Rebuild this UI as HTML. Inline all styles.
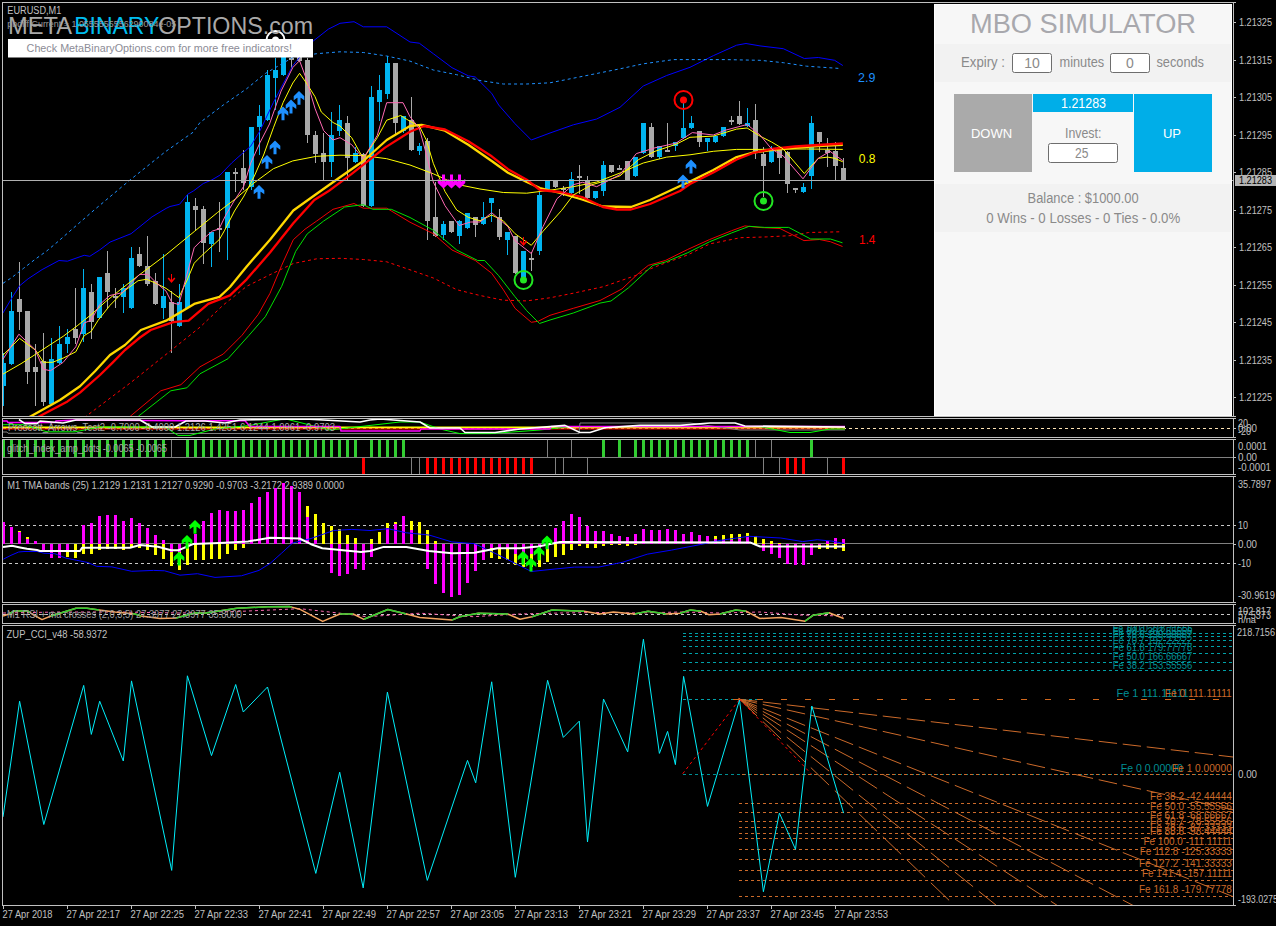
<!DOCTYPE html>
<html><head><meta charset="utf-8"><style>
html,body{margin:0;padding:0;background:#000;width:1276px;height:926px;overflow:hidden}
svg{display:block;font-family:"Liberation Sans", sans-serif}
</style></head><body>
<svg width="1276" height="926" viewBox="0 0 1276 926">
<rect width="1276" height="926" fill="#000"/>
<line x1="2" y1="2.5" x2="1234" y2="2.5" stroke="#c0c0c0" stroke-width="1" shape-rendering="crispEdges"/><line x1="2" y1="416.5" x2="1234" y2="416.5" stroke="#c0c0c0" stroke-width="1" shape-rendering="crispEdges"/><line x1="2.5" y1="2" x2="2.5" y2="417" stroke="#c0c0c0" stroke-width="1" shape-rendering="crispEdges"/><line x1="1233.5" y1="2" x2="1233.5" y2="417" stroke="#c0c0c0" stroke-width="1" shape-rendering="crispEdges"/><line x1="1234" y1="2.5" x2="1236" y2="2.5" stroke="#c0c0c0" stroke-width="1" shape-rendering="crispEdges"/><line x1="1234" y1="416.5" x2="1236" y2="416.5" stroke="#c0c0c0" stroke-width="1" shape-rendering="crispEdges"/><line x1="2" y1="418.5" x2="1234" y2="418.5" stroke="#c0c0c0" stroke-width="1" shape-rendering="crispEdges"/><line x1="2" y1="437.5" x2="1234" y2="437.5" stroke="#c0c0c0" stroke-width="1" shape-rendering="crispEdges"/><line x1="2.5" y1="418" x2="2.5" y2="438" stroke="#c0c0c0" stroke-width="1" shape-rendering="crispEdges"/><line x1="1233.5" y1="418" x2="1233.5" y2="438" stroke="#c0c0c0" stroke-width="1" shape-rendering="crispEdges"/><line x1="1234" y1="418.5" x2="1236" y2="418.5" stroke="#c0c0c0" stroke-width="1" shape-rendering="crispEdges"/><line x1="1234" y1="437.5" x2="1236" y2="437.5" stroke="#c0c0c0" stroke-width="1" shape-rendering="crispEdges"/><line x1="2" y1="439.5" x2="1234" y2="439.5" stroke="#c0c0c0" stroke-width="1" shape-rendering="crispEdges"/><line x1="2" y1="474.5" x2="1234" y2="474.5" stroke="#c0c0c0" stroke-width="1" shape-rendering="crispEdges"/><line x1="2.5" y1="439" x2="2.5" y2="475" stroke="#c0c0c0" stroke-width="1" shape-rendering="crispEdges"/><line x1="1233.5" y1="439" x2="1233.5" y2="475" stroke="#c0c0c0" stroke-width="1" shape-rendering="crispEdges"/><line x1="1234" y1="439.5" x2="1236" y2="439.5" stroke="#c0c0c0" stroke-width="1" shape-rendering="crispEdges"/><line x1="1234" y1="474.5" x2="1236" y2="474.5" stroke="#c0c0c0" stroke-width="1" shape-rendering="crispEdges"/><line x1="2" y1="476.5" x2="1234" y2="476.5" stroke="#c0c0c0" stroke-width="1" shape-rendering="crispEdges"/><line x1="2" y1="602.5" x2="1234" y2="602.5" stroke="#c0c0c0" stroke-width="1" shape-rendering="crispEdges"/><line x1="2.5" y1="476" x2="2.5" y2="603" stroke="#c0c0c0" stroke-width="1" shape-rendering="crispEdges"/><line x1="1233.5" y1="476" x2="1233.5" y2="603" stroke="#c0c0c0" stroke-width="1" shape-rendering="crispEdges"/><line x1="1234" y1="476.5" x2="1236" y2="476.5" stroke="#c0c0c0" stroke-width="1" shape-rendering="crispEdges"/><line x1="1234" y1="602.5" x2="1236" y2="602.5" stroke="#c0c0c0" stroke-width="1" shape-rendering="crispEdges"/><line x1="2" y1="604.5" x2="1234" y2="604.5" stroke="#c0c0c0" stroke-width="1" shape-rendering="crispEdges"/><line x1="2" y1="623.5" x2="1234" y2="623.5" stroke="#c0c0c0" stroke-width="1" shape-rendering="crispEdges"/><line x1="2.5" y1="604" x2="2.5" y2="624" stroke="#c0c0c0" stroke-width="1" shape-rendering="crispEdges"/><line x1="1233.5" y1="604" x2="1233.5" y2="624" stroke="#c0c0c0" stroke-width="1" shape-rendering="crispEdges"/><line x1="1234" y1="604.5" x2="1236" y2="604.5" stroke="#c0c0c0" stroke-width="1" shape-rendering="crispEdges"/><line x1="1234" y1="623.5" x2="1236" y2="623.5" stroke="#c0c0c0" stroke-width="1" shape-rendering="crispEdges"/><line x1="2" y1="625.5" x2="1234" y2="625.5" stroke="#c0c0c0" stroke-width="1" shape-rendering="crispEdges"/><line x1="2" y1="905.5" x2="1234" y2="905.5" stroke="#c0c0c0" stroke-width="1" shape-rendering="crispEdges"/><line x1="2.5" y1="625" x2="2.5" y2="906" stroke="#c0c0c0" stroke-width="1" shape-rendering="crispEdges"/><line x1="1233.5" y1="625" x2="1233.5" y2="906" stroke="#c0c0c0" stroke-width="1" shape-rendering="crispEdges"/><line x1="1234" y1="625.5" x2="1236" y2="625.5" stroke="#c0c0c0" stroke-width="1" shape-rendering="crispEdges"/><line x1="1234" y1="905.5" x2="1236" y2="905.5" stroke="#c0c0c0" stroke-width="1" shape-rendering="crispEdges"/><line x1="1234" y1="22.5" x2="1236" y2="22.5" stroke="#c0c0c0" stroke-width="1" shape-rendering="crispEdges"/><text x="1239" y="25.5" fill="#c0c0c0" font-size="10" text-anchor="start" textLength="33" lengthAdjust="spacingAndGlyphs" >1.21325</text><line x1="1234" y1="60.5" x2="1236" y2="60.5" stroke="#c0c0c0" stroke-width="1" shape-rendering="crispEdges"/><text x="1239" y="63.5" fill="#c0c0c0" font-size="10" text-anchor="start" textLength="33" lengthAdjust="spacingAndGlyphs" >1.21315</text><line x1="1234" y1="97.5" x2="1236" y2="97.5" stroke="#c0c0c0" stroke-width="1" shape-rendering="crispEdges"/><text x="1239" y="100.5" fill="#c0c0c0" font-size="10" text-anchor="start" textLength="33" lengthAdjust="spacingAndGlyphs" >1.21305</text><line x1="1234" y1="135.5" x2="1236" y2="135.5" stroke="#c0c0c0" stroke-width="1" shape-rendering="crispEdges"/><text x="1239" y="138.5" fill="#c0c0c0" font-size="10" text-anchor="start" textLength="33" lengthAdjust="spacingAndGlyphs" >1.21295</text><line x1="1234" y1="172.5" x2="1236" y2="172.5" stroke="#c0c0c0" stroke-width="1" shape-rendering="crispEdges"/><text x="1239" y="175.5" fill="#c0c0c0" font-size="10" text-anchor="start" textLength="33" lengthAdjust="spacingAndGlyphs" >1.21285</text><line x1="1234" y1="210.5" x2="1236" y2="210.5" stroke="#c0c0c0" stroke-width="1" shape-rendering="crispEdges"/><text x="1239" y="213.5" fill="#c0c0c0" font-size="10" text-anchor="start" textLength="33" lengthAdjust="spacingAndGlyphs" >1.21275</text><line x1="1234" y1="247.5" x2="1236" y2="247.5" stroke="#c0c0c0" stroke-width="1" shape-rendering="crispEdges"/><text x="1239" y="250.5" fill="#c0c0c0" font-size="10" text-anchor="start" textLength="33" lengthAdjust="spacingAndGlyphs" >1.21265</text><line x1="1234" y1="285.5" x2="1236" y2="285.5" stroke="#c0c0c0" stroke-width="1" shape-rendering="crispEdges"/><text x="1239" y="288.5" fill="#c0c0c0" font-size="10" text-anchor="start" textLength="33" lengthAdjust="spacingAndGlyphs" >1.21255</text><line x1="1234" y1="322.5" x2="1236" y2="322.5" stroke="#c0c0c0" stroke-width="1" shape-rendering="crispEdges"/><text x="1239" y="325.5" fill="#c0c0c0" font-size="10" text-anchor="start" textLength="33" lengthAdjust="spacingAndGlyphs" >1.21245</text><line x1="1234" y1="360.5" x2="1236" y2="360.5" stroke="#c0c0c0" stroke-width="1" shape-rendering="crispEdges"/><text x="1239" y="363.5" fill="#c0c0c0" font-size="10" text-anchor="start" textLength="33" lengthAdjust="spacingAndGlyphs" >1.21235</text><line x1="1234" y1="397.5" x2="1236" y2="397.5" stroke="#c0c0c0" stroke-width="1" shape-rendering="crispEdges"/><text x="1239" y="400.5" fill="#c0c0c0" font-size="10" text-anchor="start" textLength="33" lengthAdjust="spacingAndGlyphs" >1.21225</text><line x1="3.5" y1="906" x2="3.5" y2="909" stroke="#c0c0c0" stroke-width="1" shape-rendering="crispEdges"/><text x="2.5" y="918" fill="#c0c0c0" font-size="10" text-anchor="start" textLength="50" lengthAdjust="spacingAndGlyphs" >27 Apr 2018</text><line x1="67.5" y1="906" x2="67.5" y2="909" stroke="#c0c0c0" stroke-width="1" shape-rendering="crispEdges"/><text x="66.5" y="918" fill="#c0c0c0" font-size="10" text-anchor="start" textLength="53.5" lengthAdjust="spacingAndGlyphs" >27 Apr 22:17</text><line x1="131.5" y1="906" x2="131.5" y2="909" stroke="#c0c0c0" stroke-width="1" shape-rendering="crispEdges"/><text x="130.5" y="918" fill="#c0c0c0" font-size="10" text-anchor="start" textLength="53.5" lengthAdjust="spacingAndGlyphs" >27 Apr 22:25</text><line x1="195.5" y1="906" x2="195.5" y2="909" stroke="#c0c0c0" stroke-width="1" shape-rendering="crispEdges"/><text x="194.5" y="918" fill="#c0c0c0" font-size="10" text-anchor="start" textLength="53.5" lengthAdjust="spacingAndGlyphs" >27 Apr 22:33</text><line x1="259.5" y1="906" x2="259.5" y2="909" stroke="#c0c0c0" stroke-width="1" shape-rendering="crispEdges"/><text x="258.5" y="918" fill="#c0c0c0" font-size="10" text-anchor="start" textLength="53.5" lengthAdjust="spacingAndGlyphs" >27 Apr 22:41</text><line x1="323.5" y1="906" x2="323.5" y2="909" stroke="#c0c0c0" stroke-width="1" shape-rendering="crispEdges"/><text x="322.5" y="918" fill="#c0c0c0" font-size="10" text-anchor="start" textLength="53.5" lengthAdjust="spacingAndGlyphs" >27 Apr 22:49</text><line x1="387.5" y1="906" x2="387.5" y2="909" stroke="#c0c0c0" stroke-width="1" shape-rendering="crispEdges"/><text x="386.5" y="918" fill="#c0c0c0" font-size="10" text-anchor="start" textLength="53.5" lengthAdjust="spacingAndGlyphs" >27 Apr 22:57</text><line x1="451.5" y1="906" x2="451.5" y2="909" stroke="#c0c0c0" stroke-width="1" shape-rendering="crispEdges"/><text x="450.5" y="918" fill="#c0c0c0" font-size="10" text-anchor="start" textLength="53.5" lengthAdjust="spacingAndGlyphs" >27 Apr 23:05</text><line x1="515.5" y1="906" x2="515.5" y2="909" stroke="#c0c0c0" stroke-width="1" shape-rendering="crispEdges"/><text x="514.5" y="918" fill="#c0c0c0" font-size="10" text-anchor="start" textLength="53.5" lengthAdjust="spacingAndGlyphs" >27 Apr 23:13</text><line x1="579.5" y1="906" x2="579.5" y2="909" stroke="#c0c0c0" stroke-width="1" shape-rendering="crispEdges"/><text x="578.5" y="918" fill="#c0c0c0" font-size="10" text-anchor="start" textLength="53.5" lengthAdjust="spacingAndGlyphs" >27 Apr 23:21</text><line x1="643.5" y1="906" x2="643.5" y2="909" stroke="#c0c0c0" stroke-width="1" shape-rendering="crispEdges"/><text x="642.5" y="918" fill="#c0c0c0" font-size="10" text-anchor="start" textLength="53.5" lengthAdjust="spacingAndGlyphs" >27 Apr 23:29</text><line x1="707.5" y1="906" x2="707.5" y2="909" stroke="#c0c0c0" stroke-width="1" shape-rendering="crispEdges"/><text x="706.5" y="918" fill="#c0c0c0" font-size="10" text-anchor="start" textLength="53.5" lengthAdjust="spacingAndGlyphs" >27 Apr 23:37</text><line x1="771.5" y1="906" x2="771.5" y2="909" stroke="#c0c0c0" stroke-width="1" shape-rendering="crispEdges"/><text x="770.5" y="918" fill="#c0c0c0" font-size="10" text-anchor="start" textLength="53.5" lengthAdjust="spacingAndGlyphs" >27 Apr 23:45</text><line x1="835.5" y1="906" x2="835.5" y2="909" stroke="#c0c0c0" stroke-width="1" shape-rendering="crispEdges"/><text x="834.5" y="918" fill="#c0c0c0" font-size="10" text-anchor="start" textLength="53.5" lengthAdjust="spacingAndGlyphs" >27 Apr 23:53</text><rect x="3" y="353" width="1" height="53" fill="#00b4f0"/><rect x="3" y="363" width="3" height="23" fill="#00b4f0"/><rect x="11" y="292" width="1" height="73" fill="#00b4f0"/><rect x="9" y="311" width="5" height="53" fill="#00b4f0"/><rect x="19" y="262" width="1" height="68" fill="#a9a9a9"/><rect x="17" y="299" width="5" height="13" fill="#a9a9a9"/><rect x="27" y="311" width="1" height="73" fill="#a9a9a9"/><rect x="25" y="311" width="5" height="61" fill="#a9a9a9"/><rect x="35" y="344" width="1" height="62" fill="#a9a9a9"/><rect x="33" y="367" width="5" height="5" fill="#a9a9a9"/><rect x="43" y="333" width="1" height="73" fill="#a9a9a9"/><rect x="41" y="361" width="5" height="41" fill="#a9a9a9"/><rect x="51" y="338" width="1" height="67" fill="#00b4f0"/><rect x="49" y="359" width="5" height="45" fill="#00b4f0"/><rect x="59" y="326" width="1" height="38" fill="#00b4f0"/><rect x="57" y="344" width="5" height="19" fill="#00b4f0"/><rect x="67" y="329" width="1" height="24" fill="#00b4f0"/><rect x="65" y="337" width="5" height="7" fill="#00b4f0"/><rect x="75" y="288" width="1" height="56" fill="#a9a9a9"/><rect x="73" y="329" width="5" height="9" fill="#a9a9a9"/><rect x="83" y="269" width="1" height="73" fill="#00b4f0"/><rect x="81" y="288" width="5" height="46" fill="#00b4f0"/><rect x="91" y="284" width="1" height="55" fill="#a9a9a9"/><rect x="89" y="292" width="5" height="30" fill="#a9a9a9"/><rect x="99" y="277" width="1" height="42" fill="#00b4f0"/><rect x="97" y="277" width="5" height="41" fill="#00b4f0"/><rect x="107" y="251" width="1" height="58" fill="#a9a9a9"/><rect x="105" y="273" width="5" height="19" fill="#a9a9a9"/><rect x="115" y="288" width="1" height="20" fill="#a9a9a9"/><rect x="113" y="296" width="5" height="2" fill="#a9a9a9"/><rect x="123" y="284" width="1" height="29" fill="#00b4f0"/><rect x="121" y="288" width="5" height="9" fill="#00b4f0"/><rect x="131" y="247" width="1" height="62" fill="#00b4f0"/><rect x="129" y="258" width="5" height="50" fill="#00b4f0"/><rect x="139" y="247" width="1" height="20" fill="#a9a9a9"/><rect x="137" y="254" width="5" height="12" fill="#a9a9a9"/><rect x="147" y="236" width="1" height="50" fill="#a9a9a9"/><rect x="145" y="266" width="5" height="18" fill="#a9a9a9"/><rect x="155" y="273" width="1" height="32" fill="#a9a9a9"/><rect x="153" y="281" width="5" height="23" fill="#a9a9a9"/><rect x="163" y="254" width="1" height="65" fill="#00b4f0"/><rect x="161" y="296" width="5" height="12" fill="#00b4f0"/><rect x="171" y="291" width="1" height="62" fill="#a9a9a9"/><rect x="169" y="302" width="5" height="19" fill="#a9a9a9"/><rect x="179" y="284" width="1" height="43" fill="#00b4f0"/><rect x="177" y="302" width="5" height="24" fill="#00b4f0"/><rect x="187" y="195" width="1" height="114" fill="#00b4f0"/><rect x="185" y="202" width="5" height="106" fill="#00b4f0"/><rect x="195" y="198" width="1" height="32" fill="#a9a9a9"/><rect x="193" y="206" width="5" height="4" fill="#a9a9a9"/><rect x="203" y="206" width="1" height="58" fill="#a9a9a9"/><rect x="201" y="209" width="5" height="34" fill="#a9a9a9"/><rect x="211" y="232" width="1" height="35" fill="#00b4f0"/><rect x="209" y="232" width="5" height="12" fill="#00b4f0"/><rect x="219" y="202" width="1" height="50" fill="#a9a9a9"/><rect x="217" y="228" width="5" height="2" fill="#a9a9a9"/><rect x="227" y="172" width="1" height="88" fill="#00b4f0"/><rect x="225" y="172" width="5" height="56" fill="#00b4f0"/><rect x="235" y="168" width="1" height="24" fill="#a9a9a9"/><rect x="233" y="172" width="5" height="2" fill="#a9a9a9"/><rect x="243" y="150" width="1" height="40" fill="#a9a9a9"/><rect x="241" y="168" width="5" height="15" fill="#a9a9a9"/><rect x="251" y="127" width="1" height="63" fill="#00b4f0"/><rect x="249" y="127" width="5" height="60" fill="#00b4f0"/><rect x="259" y="105" width="1" height="50" fill="#00b4f0"/><rect x="257" y="116" width="5" height="11" fill="#00b4f0"/><rect x="267" y="70" width="1" height="51" fill="#00b4f0"/><rect x="265" y="75" width="5" height="45" fill="#00b4f0"/><rect x="275" y="58" width="1" height="52" fill="#00b4f0"/><rect x="273" y="70" width="5" height="8" fill="#00b4f0"/><rect x="283" y="40" width="1" height="36" fill="#00b4f0"/><rect x="281" y="45" width="5" height="30" fill="#00b4f0"/><rect x="291" y="52" width="1" height="16" fill="#a9a9a9"/><rect x="289" y="58" width="5" height="2" fill="#a9a9a9"/><rect x="299" y="45" width="1" height="17" fill="#a9a9a9"/><rect x="297" y="48" width="5" height="13" fill="#a9a9a9"/><rect x="307" y="58" width="1" height="85" fill="#a9a9a9"/><rect x="305" y="60" width="5" height="75" fill="#a9a9a9"/><rect x="315" y="131" width="1" height="32" fill="#a9a9a9"/><rect x="313" y="135" width="5" height="19" fill="#a9a9a9"/><rect x="323" y="133" width="1" height="48" fill="#a9a9a9"/><rect x="321" y="153" width="5" height="9" fill="#a9a9a9"/><rect x="331" y="112" width="1" height="65" fill="#00b4f0"/><rect x="329" y="135" width="5" height="27" fill="#00b4f0"/><rect x="339" y="105" width="1" height="31" fill="#00b4f0"/><rect x="337" y="120" width="5" height="11" fill="#00b4f0"/><rect x="347" y="116" width="1" height="65" fill="#a9a9a9"/><rect x="345" y="123" width="5" height="35" fill="#a9a9a9"/><rect x="355" y="147" width="1" height="16" fill="#00b4f0"/><rect x="353" y="153" width="5" height="9" fill="#00b4f0"/><rect x="363" y="153" width="1" height="54" fill="#a9a9a9"/><rect x="361" y="154" width="5" height="52" fill="#a9a9a9"/><rect x="371" y="86" width="1" height="121" fill="#00b4f0"/><rect x="369" y="97" width="5" height="109" fill="#00b4f0"/><rect x="379" y="75" width="1" height="46" fill="#00b4f0"/><rect x="377" y="90" width="5" height="12" fill="#00b4f0"/><rect x="387" y="56" width="1" height="43" fill="#00b4f0"/><rect x="385" y="63" width="5" height="31" fill="#00b4f0"/><rect x="395" y="63" width="1" height="71" fill="#a9a9a9"/><rect x="393" y="63" width="5" height="60" fill="#a9a9a9"/><rect x="403" y="116" width="1" height="17" fill="#00b4f0"/><rect x="401" y="116" width="5" height="15" fill="#00b4f0"/><rect x="411" y="97" width="1" height="54" fill="#a9a9a9"/><rect x="409" y="120" width="5" height="30" fill="#a9a9a9"/><rect x="419" y="143" width="1" height="12" fill="#00b4f0"/><rect x="417" y="146" width="5" height="5" fill="#00b4f0"/><rect x="427" y="138" width="1" height="102" fill="#a9a9a9"/><rect x="425" y="141" width="5" height="80" fill="#a9a9a9"/><rect x="435" y="182" width="1" height="55" fill="#a9a9a9"/><rect x="433" y="217" width="5" height="19" fill="#a9a9a9"/><rect x="443" y="221" width="1" height="19" fill="#00b4f0"/><rect x="441" y="224" width="5" height="11" fill="#00b4f0"/><rect x="451" y="221" width="1" height="12" fill="#a9a9a9"/><rect x="449" y="221" width="5" height="11" fill="#a9a9a9"/><rect x="459" y="220" width="1" height="24" fill="#00b4f0"/><rect x="457" y="221" width="5" height="15" fill="#00b4f0"/><rect x="467" y="213" width="1" height="16" fill="#00b4f0"/><rect x="465" y="213" width="5" height="15" fill="#00b4f0"/><rect x="475" y="217" width="1" height="20" fill="#a9a9a9"/><rect x="473" y="217" width="5" height="8" fill="#a9a9a9"/><rect x="483" y="202" width="1" height="23" fill="#00b4f0"/><rect x="481" y="217" width="5" height="7" fill="#00b4f0"/><rect x="491" y="198" width="1" height="24" fill="#00b4f0"/><rect x="489" y="198" width="5" height="5" fill="#00b4f0"/><rect x="499" y="209" width="1" height="31" fill="#a9a9a9"/><rect x="497" y="217" width="5" height="20" fill="#a9a9a9"/><rect x="507" y="232" width="1" height="23" fill="#00b4f0"/><rect x="505" y="232" width="5" height="8" fill="#00b4f0"/><rect x="515" y="236" width="1" height="38" fill="#a9a9a9"/><rect x="513" y="236" width="5" height="37" fill="#a9a9a9"/><rect x="523" y="251" width="1" height="31" fill="#00b4f0"/><rect x="521" y="251" width="5" height="30" fill="#00b4f0"/><rect x="531" y="252" width="1" height="19" fill="#a9a9a9"/><rect x="529" y="258" width="5" height="2" fill="#a9a9a9"/><rect x="539" y="190" width="1" height="65" fill="#00b4f0"/><rect x="537" y="195" width="5" height="56" fill="#00b4f0"/><rect x="547" y="180" width="1" height="10" fill="#00b4f0"/><rect x="545" y="180" width="5" height="9" fill="#00b4f0"/><rect x="555" y="180" width="1" height="8" fill="#a9a9a9"/><rect x="553" y="180" width="5" height="7" fill="#a9a9a9"/><rect x="563" y="186" width="1" height="10" fill="#a9a9a9"/><rect x="561" y="188" width="5" height="2" fill="#a9a9a9"/><rect x="571" y="172" width="1" height="24" fill="#00b4f0"/><rect x="569" y="179" width="5" height="14" fill="#00b4f0"/><rect x="579" y="165" width="1" height="29" fill="#a9a9a9"/><rect x="577" y="176" width="5" height="2" fill="#a9a9a9"/><rect x="587" y="176" width="1" height="23" fill="#a9a9a9"/><rect x="585" y="180" width="5" height="18" fill="#a9a9a9"/><rect x="595" y="191" width="1" height="8" fill="#00b4f0"/><rect x="593" y="191" width="5" height="7" fill="#00b4f0"/><rect x="603" y="161" width="1" height="35" fill="#00b4f0"/><rect x="601" y="165" width="5" height="26" fill="#00b4f0"/><rect x="611" y="165" width="1" height="8" fill="#a9a9a9"/><rect x="609" y="165" width="5" height="7" fill="#a9a9a9"/><rect x="619" y="165" width="1" height="4" fill="#a9a9a9"/><rect x="617" y="168" width="5" height="2" fill="#a9a9a9"/><rect x="627" y="161" width="1" height="20" fill="#a9a9a9"/><rect x="625" y="161" width="5" height="19" fill="#a9a9a9"/><rect x="635" y="157" width="1" height="20" fill="#00b4f0"/><rect x="633" y="157" width="5" height="19" fill="#00b4f0"/><rect x="643" y="123" width="1" height="31" fill="#00b4f0"/><rect x="641" y="123" width="5" height="30" fill="#00b4f0"/><rect x="651" y="123" width="1" height="35" fill="#a9a9a9"/><rect x="649" y="127" width="5" height="30" fill="#a9a9a9"/><rect x="659" y="146" width="1" height="13" fill="#00b4f0"/><rect x="657" y="146" width="5" height="11" fill="#00b4f0"/><rect x="667" y="123" width="1" height="28" fill="#a9a9a9"/><rect x="665" y="150" width="5" height="2" fill="#a9a9a9"/><rect x="675" y="142" width="1" height="9" fill="#00b4f0"/><rect x="673" y="142" width="5" height="4" fill="#00b4f0"/><rect x="683" y="102" width="1" height="37" fill="#00b4f0"/><rect x="681" y="128" width="5" height="10" fill="#00b4f0"/><rect x="691" y="116" width="1" height="13" fill="#00b4f0"/><rect x="689" y="123" width="5" height="5" fill="#00b4f0"/><rect x="699" y="131" width="1" height="16" fill="#a9a9a9"/><rect x="697" y="131" width="5" height="11" fill="#a9a9a9"/><rect x="707" y="138" width="1" height="13" fill="#00b4f0"/><rect x="705" y="138" width="5" height="4" fill="#00b4f0"/><rect x="715" y="136" width="1" height="7" fill="#00b4f0"/><rect x="713" y="136" width="5" height="6" fill="#00b4f0"/><rect x="723" y="127" width="1" height="10" fill="#00b4f0"/><rect x="721" y="127" width="5" height="9" fill="#00b4f0"/><rect x="731" y="116" width="1" height="9" fill="#a9a9a9"/><rect x="729" y="120" width="5" height="2" fill="#a9a9a9"/><rect x="739" y="101" width="1" height="24" fill="#a9a9a9"/><rect x="737" y="116" width="5" height="8" fill="#a9a9a9"/><rect x="747" y="108" width="1" height="19" fill="#00b4f0"/><rect x="745" y="123" width="5" height="3" fill="#00b4f0"/><rect x="755" y="104" width="1" height="55" fill="#a9a9a9"/><rect x="753" y="120" width="5" height="31" fill="#a9a9a9"/><rect x="763" y="147" width="1" height="50" fill="#a9a9a9"/><rect x="761" y="154" width="5" height="12" fill="#a9a9a9"/><rect x="771" y="146" width="1" height="17" fill="#00b4f0"/><rect x="769" y="150" width="5" height="12" fill="#00b4f0"/><rect x="779" y="147" width="1" height="27" fill="#a9a9a9"/><rect x="777" y="147" width="5" height="11" fill="#a9a9a9"/><rect x="787" y="151" width="1" height="42" fill="#a9a9a9"/><rect x="785" y="152" width="5" height="32" fill="#a9a9a9"/><rect x="795" y="188" width="1" height="5" fill="#a9a9a9"/><rect x="793" y="188" width="5" height="2" fill="#a9a9a9"/><rect x="803" y="183" width="1" height="10" fill="#00b4f0"/><rect x="801" y="187" width="5" height="5" fill="#00b4f0"/><rect x="811" y="116" width="1" height="73" fill="#00b4f0"/><rect x="809" y="123" width="5" height="53" fill="#00b4f0"/><rect x="819" y="132" width="1" height="20" fill="#a9a9a9"/><rect x="817" y="132" width="5" height="10" fill="#a9a9a9"/><rect x="827" y="138" width="1" height="29" fill="#a9a9a9"/><rect x="825" y="150" width="5" height="3" fill="#a9a9a9"/><rect x="835" y="142" width="1" height="39" fill="#a9a9a9"/><rect x="833" y="151" width="5" height="15" fill="#a9a9a9"/><rect x="843" y="158" width="1" height="23" fill="#a9a9a9"/><rect x="841" y="168" width="5" height="12" fill="#a9a9a9"/><defs><clipPath id="cm"><rect x="3" y="3" width="1230" height="413"/></clipPath></defs><g clip-path="url(#cm)"><polyline points="80.0,422.0 86.4,416.0 130.6,382.7 170.8,350.6 200.0,327.2 223.3,305.0 246.7,286.3 270.0,274.7 293.3,263.5 316.7,258.8 340.0,258.3 363.3,259.5 386.7,261.8 410.0,269.8 433.3,278.0 456.7,289.7 480.0,295.5 503.3,300.2 526.7,300.9 550.0,297.8 573.3,293.2 603.3,286.7 635.1,275.7 654.9,266.9 687.8,254.9 709.7,243.9 740.4,237.7 766.8,236.9 793.1,235.5 808.5,232.5 840.3,231.8" fill="none" stroke="#ff0000" stroke-width="1" stroke-linejoin="round" stroke-dasharray="3,3" /><polyline points="123.0,422.0 130.6,416.0 160.8,390.8 180.9,384.7 200.0,366.8 223.3,354.0 242.0,335.3 258.3,314.3 270.0,293.3 281.7,265.3 293.3,239.7 305.0,229.2 316.7,221.0 333.0,209.3 354.0,203.5 363.3,208.2 386.7,208.2 410.0,222.2 433.3,233.7 452.0,250.0 475.3,260.5 491.7,273.3 503.3,289.7 515.0,308.3 531.3,322.3 538.3,321.2 550.0,315.3 573.3,308.3 600.0,300.5 622.0,288.9 639.5,272.4 648.3,265.4 665.8,260.3 687.8,249.4 709.7,239.5 731.7,230.7 744.8,225.9 758.0,227.4 780.0,228.5 804.0,240.6 819.4,239.5 830.4,241.7 842.5,246.5" fill="none" stroke="#f00000" stroke-width="1" stroke-linejoin="round" /><polyline points="131.0,422.0 138.7,416.0 170.8,390.8 186.9,387.8 200.0,373.8 228.0,358.7 249.0,335.3 265.3,316.7 281.7,286.3 295.7,251.3 307.3,233.8 323.7,221.0 344.7,207.0 363.3,204.7 372.7,209.3 391.3,209.3 410.0,217.5 433.3,230.2 456.7,250.0 477.7,260.5 484.7,260.5 498.7,275.7 515.0,296.7 526.7,310.7 539.5,323.5 550.0,320.0 573.3,313.0 600.0,303.1 611.0,301.0 628.5,287.8 652.7,265.4 665.8,261.9 687.8,252.7 709.7,241.7 731.7,232.9 749.2,226.3 764.6,227.4 788.7,227.4 810.7,239.0 830.4,239.0 842.5,242.8" fill="none" stroke="#00e000" stroke-width="1" stroke-linejoin="round" /><polyline points="2.8,313.2 11.2,299.1 19.6,285.8 28.1,278.8 42.1,269.6 59.0,260.5 67.4,261.2 84.2,255.3 89.8,256.3 99.6,250.0 110.0,242.1 131.1,233.7 152.1,216.8 166.1,208.4 170.0,206.5 179.5,204.3 187.8,194.2 193.8,190.7 203.3,183.5 211.6,180.0 219.9,175.2 231.8,162.8 241.3,154.4 250.8,146.1 260.0,130.7 273.4,102.5 292.8,65.6 312.0,42.0 328.3,29.2 340.0,23.3 354.0,21.7 363.3,26.8 386.7,26.8 410.0,42.0 419.3,43.2 433.3,53.7 452.0,67.7 468.3,75.8 475.3,77.0 491.7,93.3 498.7,105.0 515.0,123.7 531.3,140.0 550.0,133.0 573.3,124.8 596.7,119.0 620.0,107.3 643.3,86.0 666.7,75.5 690.0,67.3 713.3,55.7 736.6,45.2 746.0,43.5 760.0,45.9 783.3,48.7 804.3,58.5 818.3,57.5 834.6,60.3 842.8,65.5" fill="none" stroke="#0000ff" stroke-width="1" stroke-linejoin="round" /><polyline points="3.0,283.3 11.7,277.6 23.3,268.5 35.0,259.4 46.7,251.0 58.3,241.3 70.0,231.0 95.0,209.3 130.0,180.0 165.0,152.0 193.0,132.3 200.0,122.5 223.3,105.0 246.7,88.7 265.3,73.5 293.3,57.2 316.7,53.7 340.0,51.8 363.3,52.5 386.7,56.0 410.0,61.1 433.3,70.0 456.7,74.7 480.0,80.5 503.3,84.0 526.7,84.0 550.0,82.8 573.3,78.2 596.7,73.5 620.0,68.8 643.3,63.8 673.6,59.6 701.6,59.6 725.0,59.6 760.0,60.3 783.3,62.7 806.6,66.2 840.4,68.5" fill="none" stroke="#1e90ff" stroke-width="1" stroke-linejoin="round" stroke-dasharray="3,3" /><polyline points="2.8,374.2 21.0,363.7 35.1,354.6 49.1,345.4 63.2,336.3 77.2,325.8 91.2,314.6 105.3,301.9 120.0,290.0 138.1,275.8 166.1,254.7 194.2,231.6 217.5,212.5 235.3,199.0 253.9,183.0 273.4,168.7 292.8,160.9 315.0,156.6 316.7,156.3 340.0,155.2 363.3,155.6 386.7,158.7 410.0,165.0 433.3,173.8 456.7,184.3 480.0,189.0 503.3,192.5 526.7,193.2 550.0,190.2 573.3,186.7 596.7,182.0 620.0,173.0 643.3,163.0 666.7,157.1 690.0,154.8 713.3,151.3 736.6,149.4 760.0,149.4 783.3,149.0 806.6,149.0 842.8,149.4" fill="none" stroke="#ffff00" stroke-width="1" stroke-linejoin="round" /><polyline points="20.0,422.0 31.3,416.0 60.0,400.0 80.0,386.3 95.0,371.3 110.0,355.0 125.0,345.0 140.9,330.0 166.1,320.7 194.2,303.9 219.5,296.8 230.0,287.0 246.7,266.5 270.0,239.7 293.3,210.5 316.7,193.7 340.0,177.3 363.3,161.0 386.7,140.0 410.0,126.0 421.7,124.8 445.0,130.7 468.3,144.7 491.7,161.0 508.0,172.7 526.7,182.0 540.0,188.0 560.0,193.0 582.0,199.5 603.0,206.5 631.0,207.0 650.0,200.0 680.0,186.0 690.0,181.6 713.3,170.0 736.6,157.1 753.0,152.5 771.6,150.1 795.0,147.8 818.3,146.2 842.8,144.8" fill="none" stroke="#ffd700" stroke-width="2.3" stroke-linejoin="round" /><polyline points="28.0,422.0 40.0,416.0 67.5,401.4 80.0,392.6 100.0,375.0 112.6,362.6 125.0,350.0 140.0,337.5 150.7,330.0 173.2,322.1 188.6,320.7 208.2,303.9 230.0,295.4 246.7,279.3 270.0,252.5 293.3,223.3 314.3,200.0 328.3,191.3 351.7,173.9 385.0,147.6 410.0,131.8 424.0,126.0 445.0,129.5 468.3,141.2 491.7,156.3 508.0,169.2 526.7,179.7 540.0,190.0 560.0,192.0 582.0,197.0 603.0,207.0 617.0,209.5 631.0,209.5 650.0,204.0 680.0,191.0 690.0,184.0 713.3,172.5 736.6,159.5 753.0,153.0 771.6,149.0 795.0,146.5 818.3,145.0 842.8,143.5" fill="none" stroke="#ff0000" stroke-width="2.3" stroke-linejoin="round" /><polyline points="2.8,355.3 19.6,338.4 35.8,350.4 43.5,362.3 52.6,362.3 63.2,358.1 75.8,351.8 84.2,335.6 91.2,331.4 98.2,320.2 110.0,305.3 124.0,291.2 138.1,280.7 146.5,279.3 154.9,282.8 166.1,288.4 178.8,297.5 187.2,280.0 194.2,263.2 201.2,256.1 219.5,239.3 224.7,230.2 234.5,211.0 244.0,196.0 253.9,177.0 263.6,155.0 273.4,127.8 283.1,102.5 292.8,83.0 299.6,73.3 306.4,83.0 315.0,96.7 321.3,112.0 333.0,122.5 340.0,126.0 351.7,137.7 363.3,158.7 377.3,137.7 386.7,120.2 400.7,115.5 410.0,121.3 419.3,126.0 426.3,140.0 433.3,163.3 445.0,191.5 456.7,210.0 468.3,217.3 480.0,220.8 491.7,215.0 503.3,220.8 515.0,233.7 531.3,245.3 543.0,231.3 561.7,210.3 573.3,195.0 592.0,184.7 608.3,180.0 620.0,175.8 638.7,159.5 655.0,151.3 676.0,144.3 690.0,137.3 713.3,136.1 736.6,129.1 747.1,128.0 760.0,136.1 771.6,142.0 783.3,149.0 804.3,173.5 818.3,158.3 827.6,157.1 834.6,158.3 842.8,161.8" fill="none" stroke="#ffff00" stroke-width="1" stroke-linejoin="round" /><polyline points="2.8,359.5 18.9,334.2 35.1,349.6 43.5,369.3 50.5,370.7 63.2,362.3 75.8,346.8 84.2,323.0 91.2,320.2 99.6,304.7 109.5,295.6 122.6,292.6 139.5,274.4 147.9,274.4 156.3,282.8 166.1,291.2 171.8,302.5 178.8,304.6 185.8,278.6 194.2,247.7 201.2,240.7 212.5,231.0 219.0,229.0 225.8,215.0 234.1,201.0 243.6,186.5 250.8,163.0 260.0,142.6 269.5,124.0 281.1,91.0 292.8,67.5 299.6,60.7 306.4,79.2 315.0,108.4 323.7,130.7 333.0,140.0 340.0,137.7 351.7,144.7 363.3,158.7 377.3,135.3 386.7,102.7 403.0,102.7 410.0,116.7 419.3,128.3 426.3,154.0 433.3,182.0 445.0,205.7 459.0,225.5 470.7,222.0 480.0,222.0 491.7,212.7 508.0,226.7 515.0,240.7 531.3,253.5 543.0,226.7 557.0,198.7 573.3,184.7 582.7,182.3 596.7,186.7 620.0,174.6 636.3,153.6 655.0,147.8 676.0,143.1 692.3,132.6 713.3,135.0 725.0,130.3 747.1,124.5 760.0,135.0 771.6,149.0 783.3,156.0 803.0,178.8 818.3,158.3 830.0,151.3 842.8,160.6" fill="none" stroke="#ff69b4" stroke-width="1" stroke-linejoin="round" /></g><g clip-path="url(#cm)"><polygon points="259.00,185.00 264.30,190.30 264.30,194.30 260.80,191.80 260.50,192.10 260.50,198.80 257.50,198.80 257.50,192.10 257.20,191.80 253.70,194.30 253.70,190.30" fill="#1e90ff"/><polygon points="267.00,155.00 272.30,160.30 272.30,164.30 268.80,161.80 268.50,162.10 268.50,168.80 265.50,168.80 265.50,162.10 265.20,161.80 261.70,164.30 261.70,160.30" fill="#1e90ff"/><polygon points="275.00,140.50 280.30,145.80 280.30,149.80 276.80,147.30 276.50,147.60 276.50,154.30 273.50,154.30 273.50,147.60 273.20,147.30 269.70,149.80 269.70,145.80" fill="#1e90ff"/><polygon points="283.00,106.40 288.30,111.70 288.30,115.70 284.80,113.20 284.50,113.50 284.50,120.20 281.50,120.20 281.50,113.50 281.20,113.20 277.70,115.70 277.70,111.70" fill="#1e90ff"/><polygon points="291.00,99.60 296.30,104.90 296.30,108.90 292.80,106.40 292.50,106.70 292.50,113.40 289.50,113.40 289.50,106.70 289.20,106.40 285.70,108.90 285.70,104.90" fill="#1e90ff"/><polygon points="299.00,90.90 304.30,96.20 304.30,100.20 300.80,97.70 300.50,98.00 300.50,104.70 297.50,104.70 297.50,98.00 297.20,97.70 293.70,100.20 293.70,96.20" fill="#1e90ff"/><polygon points="683.00,174.50 688.30,179.80 688.30,183.80 684.80,181.30 684.50,181.60 684.50,188.30 681.50,188.30 681.50,181.60 681.20,181.30 677.70,183.80 677.70,179.80" fill="#1e90ff"/><polygon points="691.00,159.60 696.30,164.90 696.30,168.90 692.80,166.40 692.50,166.70 692.50,173.40 689.50,173.40 689.50,166.70 689.20,166.40 685.70,168.90 685.70,164.90" fill="#1e90ff"/><polygon points="443.50,188.50 449.25,182.90 449.25,178.90 445.40,181.50 445.00,181.20 445.00,174.50 442.00,174.50 442.00,181.20 441.60,181.50 437.75,178.90 437.75,182.90" fill="#ff00ff"/><polygon points="451.50,188.50 457.25,182.90 457.25,178.90 453.40,181.50 453.00,181.20 453.00,174.50 450.00,174.50 450.00,181.20 449.60,181.50 445.75,178.90 445.75,182.90" fill="#ff00ff"/><polygon points="459.50,188.50 465.25,182.90 465.25,178.90 461.40,181.50 461.00,181.20 461.00,174.50 458.00,174.50 458.00,181.20 457.60,181.50 453.75,178.90 453.75,182.90" fill="#ff00ff"/><rect x="171" y="274" width="1" height="8" fill="#ff0000"/><polyline points="168.2,278 171.5,281.8 174.8,278" fill="none" stroke="#ff0000" stroke-width="1.6"/><rect x="523" y="237" width="1" height="8" fill="#ff0000"/><polyline points="520.2,241 523.5,244.8 526.8,241" fill="none" stroke="#ff0000" stroke-width="1.6"/><circle cx="683.5" cy="100" r="9" fill="none" stroke="#ff0000" stroke-width="2"/><circle cx="683.5" cy="100" r="3.5" fill="#ff0000"/><circle cx="523.5" cy="280" r="9" fill="none" stroke="#22e622" stroke-width="2"/><circle cx="523.5" cy="280" r="3.5" fill="#22e622"/><circle cx="763.5" cy="201" r="9" fill="none" stroke="#22e622" stroke-width="2"/><circle cx="763.5" cy="201" r="3.5" fill="#22e622"/><circle cx="275.5" cy="40" r="9" fill="none" stroke="#ffffff" stroke-width="2"/><circle cx="275.5" cy="40" r="3.5" fill="#ffffff"/></g><line x1="3" y1="180.5" x2="1233" y2="180.5" stroke="#b0b0b0" stroke-width="1" shape-rendering="crispEdges"/><rect x="1235" y="175" width="41" height="11" fill="#b4b4b4"/><text x="1239" y="184" fill="#000000" font-size="10" text-anchor="start" textLength="33" lengthAdjust="spacingAndGlyphs" >1.21283</text><text x="858" y="82" fill="#1e90ff" font-size="13" text-anchor="start" textLength="17.3" lengthAdjust="spacingAndGlyphs" >2.9</text><text x="858.8" y="162.7" fill="#ffff00" font-size="13" text-anchor="start" textLength="16.7" lengthAdjust="spacingAndGlyphs" >0.8</text><text x="859" y="244.3" fill="#ff0000" font-size="13" text-anchor="start" textLength="16.4" lengthAdjust="spacingAndGlyphs" >1.4</text><defs><clipPath id="w2"><rect x="3" y="419" width="1230" height="18"/></clipPath><clipPath id="w3"><rect x="3" y="440" width="1230" height="34"/></clipPath><clipPath id="w4"><rect x="3" y="477" width="1230" height="125"/></clipPath><clipPath id="w5"><rect x="3" y="605" width="1230" height="18"/></clipPath><clipPath id="w6"><rect x="3" y="626" width="1230" height="279"/></clipPath></defs><g clip-path="url(#w2)"><line x1="3" y1="428.5" x2="1233" y2="428.5" stroke="#ffe4b5" stroke-width="1" stroke-dasharray="3,3" shape-rendering="crispEdges"/><polyline points="3.0,427.4 845.0,427.4" fill="none" stroke="#ffff00" stroke-width="2" stroke-linejoin="round" /><polyline points="3.0,429.0 845.0,429.0" fill="none" stroke="#ff0000" stroke-width="1" stroke-linejoin="round" /><polyline points="3.0,432.0 7.0,432.0 8.0,433.3 38.0,433.3 320.0,433.6 579.0,433.6 580.0,423.0 690.0,423.0 740.0,430.0 845.0,430.0" fill="none" stroke="#808080" stroke-width="1" stroke-linejoin="round" /><polyline points="3.0,424.7 23.0,424.7 47.0,431.8 75.0,431.8 100.0,427.0 165.0,427.0 178.0,435.4 190.0,435.4 215.0,429.0 250.0,425.4 285.0,418.8 330.0,430.0 400.0,422.0 420.0,422.0 440.0,429.0 460.0,433.6 490.0,433.6 540.0,430.0 570.0,426.6 760.0,426.6 790.0,432.5 810.0,432.5 830.0,429.0 845.0,429.0" fill="none" stroke="#00ff00" stroke-width="1" stroke-linejoin="round" /><polyline points="3.0,421.0 7.0,421.0 8.0,422.6 55.0,422.6 56.0,421.0 76.0,420.0 183.0,420.7 245.0,420.7 250.0,426.6 340.0,426.6 341.0,431.0 420.0,431.0 421.0,429.0 550.0,429.0 551.0,426.6 845.0,426.6" fill="none" stroke="#ff00ff" stroke-width="1.5" stroke-linejoin="round" /><polyline points="19.0,419.5 25.0,423.6 37.0,423.6 40.0,421.0 63.0,423.0 76.0,420.0 140.0,420.0 152.0,427.0 175.0,427.0 186.0,421.0 205.0,421.0 225.0,423.0 240.0,420.0 305.0,419.0 360.0,422.0 370.0,420.0 380.0,419.0 420.0,422.0 430.0,428.0 460.0,428.0 465.0,432.5 495.0,432.5 520.0,429.0 565.0,425.4 580.0,432.5 590.0,432.5 605.0,427.8 640.0,425.4 680.0,425.4 710.0,423.0 735.0,423.0 745.0,426.0 845.0,427.0" fill="none" stroke="#ffffff" stroke-width="1.6" stroke-linejoin="round" /><text x="8" y="430.5" fill="#a8a8a8" font-size="10" text-anchor="start" textLength="327" lengthAdjust="spacingAndGlyphs" >Prescott_Arrows_Test2 -0.7000 -0.4000 1.2126 1.4251 6.1244 1.0961 -0.9703</text></g><text x="1238" y="427" fill="#c0c0c0" font-size="10" text-anchor="start" textLength="10" lengthAdjust="spacingAndGlyphs" >20</text><text x="1238" y="431.5" fill="#c0c0c0" font-size="10" text-anchor="start" textLength="19" lengthAdjust="spacingAndGlyphs" >0.00</text><text x="1238" y="434.5" fill="#c0c0c0" font-size="10" text-anchor="start" textLength="13" lengthAdjust="spacingAndGlyphs" >-20</text><line x1="1234" y1="428.5" x2="1236" y2="428.5" stroke="#c0c0c0" stroke-width="1" shape-rendering="crispEdges"/><g clip-path="url(#w3)"><line x1="3" y1="457.5" x2="1233" y2="457.5" stroke="#808080" stroke-width="1" shape-rendering="crispEdges"/><rect x="2" y="440" width="3" height="17" fill="#32cd32"/><rect x="10" y="440" width="3" height="17" fill="#32cd32"/><rect x="18" y="440" width="3" height="17" fill="#32cd32"/><rect x="26" y="440" width="3" height="17" fill="#32cd32"/><rect x="34" y="440" width="3" height="17" fill="#32cd32"/><rect x="42" y="440" width="3" height="17" fill="#32cd32"/><rect x="50" y="440" width="3" height="17" fill="#32cd32"/><rect x="58" y="440" width="3" height="17" fill="#32cd32"/><rect x="66" y="440" width="3" height="17" fill="#32cd32"/><rect x="74" y="440" width="3" height="17" fill="#32cd32"/><rect x="82" y="440" width="3" height="17" fill="#32cd32"/><rect x="90" y="440" width="3" height="17" fill="#32cd32"/><rect x="98" y="440" width="3" height="17" fill="#32cd32"/><rect x="106" y="440" width="3" height="17" fill="#32cd32"/><rect x="114" y="440" width="3" height="17" fill="#32cd32"/><rect x="122" y="440" width="3" height="17" fill="#32cd32"/><rect x="130" y="440" width="3" height="17" fill="#32cd32"/><rect x="138" y="440" width="3" height="17" fill="#32cd32"/><rect x="146" y="440" width="3" height="17" fill="#32cd32"/><rect x="154" y="440" width="3" height="17" fill="#32cd32"/><rect x="162" y="440" width="3" height="17" fill="#32cd32"/><rect x="186" y="440" width="3" height="17" fill="#32cd32"/><rect x="194" y="440" width="3" height="17" fill="#32cd32"/><rect x="202" y="440" width="3" height="17" fill="#32cd32"/><rect x="210" y="440" width="3" height="17" fill="#32cd32"/><rect x="218" y="440" width="3" height="17" fill="#32cd32"/><rect x="226" y="440" width="3" height="17" fill="#32cd32"/><rect x="234" y="440" width="3" height="17" fill="#32cd32"/><rect x="242" y="440" width="3" height="17" fill="#32cd32"/><rect x="250" y="440" width="3" height="17" fill="#32cd32"/><rect x="258" y="440" width="3" height="17" fill="#32cd32"/><rect x="266" y="440" width="3" height="17" fill="#32cd32"/><rect x="274" y="440" width="3" height="17" fill="#32cd32"/><rect x="282" y="440" width="3" height="17" fill="#32cd32"/><rect x="290" y="440" width="3" height="17" fill="#32cd32"/><rect x="298" y="440" width="3" height="17" fill="#32cd32"/><rect x="306" y="440" width="3" height="17" fill="#32cd32"/><rect x="314" y="440" width="3" height="17" fill="#32cd32"/><rect x="322" y="440" width="3" height="17" fill="#32cd32"/><rect x="330" y="440" width="3" height="17" fill="#32cd32"/><rect x="338" y="440" width="3" height="17" fill="#32cd32"/><rect x="346" y="440" width="3" height="17" fill="#32cd32"/><rect x="354" y="440" width="3" height="17" fill="#32cd32"/><rect x="370" y="440" width="3" height="17" fill="#32cd32"/><rect x="378" y="440" width="3" height="17" fill="#32cd32"/><rect x="386" y="440" width="3" height="17" fill="#32cd32"/><rect x="394" y="440" width="3" height="17" fill="#32cd32"/><rect x="402" y="440" width="3" height="17" fill="#32cd32"/><rect x="602" y="440" width="3" height="17" fill="#32cd32"/><rect x="618" y="440" width="3" height="17" fill="#32cd32"/><rect x="634" y="440" width="3" height="17" fill="#32cd32"/><rect x="642" y="440" width="3" height="17" fill="#32cd32"/><rect x="650" y="440" width="3" height="17" fill="#32cd32"/><rect x="658" y="440" width="3" height="17" fill="#32cd32"/><rect x="666" y="440" width="3" height="17" fill="#32cd32"/><rect x="674" y="440" width="3" height="17" fill="#32cd32"/><rect x="682" y="440" width="3" height="17" fill="#32cd32"/><rect x="690" y="440" width="3" height="17" fill="#32cd32"/><rect x="698" y="440" width="3" height="17" fill="#32cd32"/><rect x="706" y="440" width="3" height="17" fill="#32cd32"/><rect x="714" y="440" width="3" height="17" fill="#32cd32"/><rect x="722" y="440" width="3" height="17" fill="#32cd32"/><rect x="730" y="440" width="3" height="17" fill="#32cd32"/><rect x="738" y="440" width="3" height="17" fill="#32cd32"/><rect x="746" y="440" width="3" height="17" fill="#32cd32"/><rect x="810" y="440" width="3" height="17" fill="#32cd32"/><rect x="362" y="458" width="3" height="16" fill="#ff0000"/><rect x="426" y="458" width="3" height="16" fill="#ff0000"/><rect x="434" y="458" width="3" height="16" fill="#ff0000"/><rect x="442" y="458" width="3" height="16" fill="#ff0000"/><rect x="450" y="458" width="3" height="16" fill="#ff0000"/><rect x="458" y="458" width="3" height="16" fill="#ff0000"/><rect x="466" y="458" width="3" height="16" fill="#ff0000"/><rect x="474" y="458" width="3" height="16" fill="#ff0000"/><rect x="482" y="458" width="3" height="16" fill="#ff0000"/><rect x="490" y="458" width="3" height="16" fill="#ff0000"/><rect x="498" y="458" width="3" height="16" fill="#ff0000"/><rect x="506" y="458" width="3" height="16" fill="#ff0000"/><rect x="514" y="458" width="3" height="16" fill="#ff0000"/><rect x="522" y="458" width="3" height="16" fill="#ff0000"/><rect x="530" y="458" width="3" height="16" fill="#ff0000"/><rect x="786" y="458" width="3" height="16" fill="#ff0000"/><rect x="794" y="458" width="3" height="16" fill="#ff0000"/><rect x="802" y="458" width="3" height="16" fill="#ff0000"/><rect x="842" y="458" width="3" height="16" fill="#ff0000"/><rect x="171" y="440" width="1" height="17" fill="#808080"/><rect x="547" y="440" width="1" height="17" fill="#808080"/><rect x="571" y="440" width="1" height="17" fill="#808080"/><rect x="755" y="440" width="1" height="17" fill="#808080"/><rect x="771" y="440" width="1" height="17" fill="#808080"/><rect x="411" y="458" width="1" height="16" fill="#808080"/><rect x="419" y="458" width="1" height="16" fill="#808080"/><rect x="555" y="458" width="1" height="16" fill="#808080"/><rect x="563" y="458" width="1" height="16" fill="#808080"/><rect x="587" y="458" width="1" height="16" fill="#808080"/><rect x="763" y="458" width="1" height="16" fill="#808080"/><rect x="779" y="458" width="1" height="16" fill="#808080"/><rect x="827" y="458" width="1" height="16" fill="#808080"/><text x="7" y="452.4" fill="#a8a8a8" font-size="10" text-anchor="start" textLength="160" lengthAdjust="spacingAndGlyphs" >glitch_index_amp_dots -0.0065 -0.0065</text></g><text x="1238" y="449.5" fill="#c0c0c0" font-size="10" text-anchor="start" textLength="29" lengthAdjust="spacingAndGlyphs" >0.0001</text><text x="1238" y="461" fill="#c0c0c0" font-size="10" text-anchor="start" textLength="19" lengthAdjust="spacingAndGlyphs" >0.00</text><text x="1238" y="471" fill="#c0c0c0" font-size="10" text-anchor="start" textLength="33" lengthAdjust="spacingAndGlyphs" >-0.0001</text><line x1="1234" y1="457.5" x2="1236" y2="457.5" stroke="#c0c0c0" stroke-width="1" shape-rendering="crispEdges"/><g clip-path="url(#w4)"><line x1="3" y1="525.5" x2="1233" y2="525.5" stroke="#c8c8c8" stroke-width="1" stroke-dasharray="3,3" shape-rendering="crispEdges"/><line x1="3" y1="563.5" x2="1233" y2="563.5" stroke="#c8c8c8" stroke-width="1" stroke-dasharray="3,3" shape-rendering="crispEdges"/><line x1="3" y1="543.5" x2="1233" y2="543.5" stroke="#808080" stroke-width="1" shape-rendering="crispEdges"/><rect x="2" y="522" width="3" height="22" fill="#ff00ff"/><rect x="10" y="527" width="3" height="17" fill="#ff00ff"/><rect x="18" y="531" width="3" height="1" fill="#ffff00"/><rect x="18" y="532" width="3" height="12" fill="#ff00ff"/><rect x="26" y="537" width="3" height="2" fill="#ffff00"/><rect x="26" y="539" width="3" height="5" fill="#ff00ff"/><rect x="34" y="541" width="3" height="3" fill="#ff00ff"/><rect x="42" y="544" width="3" height="7" fill="#ff00ff"/><rect x="42" y="551" width="3" height="1" fill="#ffff00"/><rect x="50" y="544" width="3" height="14" fill="#ff00ff"/><rect x="58" y="544" width="3" height="14" fill="#ff00ff"/><rect x="66" y="544" width="3" height="6" fill="#ff00ff"/><rect x="66" y="550" width="3" height="7" fill="#ffff00"/><rect x="74" y="544" width="3" height="14" fill="#ffff00"/><rect x="82" y="525" width="3" height="19" fill="#ff00ff"/><rect x="82" y="544" width="3" height="10" fill="#ffff00"/><rect x="90" y="523" width="3" height="21" fill="#ff00ff"/><rect x="90" y="544" width="3" height="10" fill="#ffff00"/><rect x="98" y="516" width="3" height="28" fill="#ff00ff"/><rect x="98" y="544" width="3" height="6" fill="#ffff00"/><rect x="106" y="515" width="3" height="29" fill="#ff00ff"/><rect x="106" y="544" width="3" height="5" fill="#ffff00"/><rect x="114" y="515" width="3" height="29" fill="#ff00ff"/><rect x="114" y="544" width="3" height="5" fill="#ffff00"/><rect x="122" y="521" width="3" height="23" fill="#ff00ff"/><rect x="122" y="544" width="3" height="6" fill="#ffff00"/><rect x="130" y="518" width="3" height="26" fill="#ff00ff"/><rect x="130" y="544" width="3" height="4" fill="#ffff00"/><rect x="138" y="523" width="3" height="21" fill="#ff00ff"/><rect x="138" y="544" width="3" height="4" fill="#ffff00"/><rect x="146" y="528" width="3" height="16" fill="#ff00ff"/><rect x="146" y="544" width="3" height="6" fill="#ffff00"/><rect x="154" y="535" width="3" height="9" fill="#ff00ff"/><rect x="154" y="544" width="3" height="11" fill="#ffff00"/><rect x="162" y="540" width="3" height="4" fill="#ff00ff"/><rect x="162" y="544" width="3" height="15" fill="#ffff00"/><rect x="170" y="544" width="3" height="8" fill="#ff00ff"/><rect x="170" y="552" width="3" height="14" fill="#ffff00"/><rect x="178" y="544" width="3" height="8" fill="#ff00ff"/><rect x="178" y="552" width="3" height="18" fill="#ffff00"/><rect x="186" y="544" width="3" height="21" fill="#ffff00"/><rect x="194" y="534" width="3" height="10" fill="#ff00ff"/><rect x="194" y="544" width="3" height="16" fill="#ffff00"/><rect x="202" y="521" width="3" height="23" fill="#ff00ff"/><rect x="202" y="544" width="3" height="16" fill="#ffff00"/><rect x="210" y="513" width="3" height="31" fill="#ff00ff"/><rect x="210" y="544" width="3" height="15" fill="#ffff00"/><rect x="218" y="510" width="3" height="34" fill="#ff00ff"/><rect x="218" y="544" width="3" height="15" fill="#ffff00"/><rect x="226" y="511" width="3" height="33" fill="#ff00ff"/><rect x="226" y="544" width="3" height="10" fill="#ffff00"/><rect x="234" y="511" width="3" height="33" fill="#ff00ff"/><rect x="234" y="544" width="3" height="6" fill="#ffff00"/><rect x="242" y="510" width="3" height="34" fill="#ff00ff"/><rect x="242" y="544" width="3" height="4" fill="#ffff00"/><rect x="250" y="503" width="3" height="41" fill="#ff00ff"/><rect x="258" y="497" width="3" height="47" fill="#ff00ff"/><rect x="266" y="492" width="3" height="52" fill="#ff00ff"/><rect x="274" y="488" width="3" height="56" fill="#ff00ff"/><rect x="282" y="483" width="3" height="61" fill="#ff00ff"/><rect x="290" y="486" width="3" height="58" fill="#ff00ff"/><rect x="298" y="492" width="3" height="52" fill="#ff00ff"/><rect x="306" y="506" width="3" height="11" fill="#ffff00"/><rect x="306" y="517" width="3" height="27" fill="#ff00ff"/><rect x="314" y="514" width="3" height="26" fill="#ffff00"/><rect x="314" y="540" width="3" height="4" fill="#ff00ff"/><rect x="322" y="523" width="3" height="21" fill="#ffff00"/><rect x="330" y="526" width="3" height="18" fill="#ffff00"/><rect x="330" y="544" width="3" height="29" fill="#ff00ff"/><rect x="338" y="529" width="3" height="15" fill="#ffff00"/><rect x="338" y="544" width="3" height="32" fill="#ff00ff"/><rect x="346" y="535" width="3" height="9" fill="#ffff00"/><rect x="346" y="544" width="3" height="30" fill="#ff00ff"/><rect x="354" y="538" width="3" height="6" fill="#ffff00"/><rect x="354" y="544" width="3" height="25" fill="#ff00ff"/><rect x="362" y="544" width="3" height="26" fill="#ff00ff"/><rect x="370" y="539" width="3" height="5" fill="#ffff00"/><rect x="370" y="544" width="3" height="13" fill="#ff00ff"/><rect x="378" y="532" width="3" height="12" fill="#ffff00"/><rect x="386" y="523" width="3" height="5" fill="#ffff00"/><rect x="386" y="528" width="3" height="16" fill="#ff00ff"/><rect x="394" y="522" width="3" height="2" fill="#ffff00"/><rect x="394" y="524" width="3" height="20" fill="#ff00ff"/><rect x="402" y="516" width="3" height="28" fill="#ff00ff"/><rect x="410" y="521" width="3" height="9" fill="#ffff00"/><rect x="410" y="530" width="3" height="14" fill="#ff00ff"/><rect x="418" y="522" width="3" height="22" fill="#ffff00"/><rect x="426" y="530" width="3" height="14" fill="#ffff00"/><rect x="426" y="544" width="3" height="25" fill="#ff00ff"/><rect x="434" y="541" width="3" height="3" fill="#ffff00"/><rect x="434" y="544" width="3" height="40" fill="#ff00ff"/><rect x="442" y="544" width="3" height="49" fill="#ff00ff"/><rect x="450" y="544" width="3" height="53" fill="#ff00ff"/><rect x="458" y="544" width="3" height="51" fill="#ff00ff"/><rect x="466" y="544" width="3" height="39" fill="#ff00ff"/><rect x="474" y="544" width="3" height="27" fill="#ff00ff"/><rect x="482" y="544" width="3" height="16" fill="#ff00ff"/><rect x="490" y="544" width="3" height="4" fill="#ff00ff"/><rect x="490" y="548" width="3" height="10" fill="#ffff00"/><rect x="498" y="544" width="3" height="4" fill="#ff00ff"/><rect x="498" y="548" width="3" height="11" fill="#ffff00"/><rect x="506" y="544" width="3" height="4" fill="#ff00ff"/><rect x="506" y="548" width="3" height="12" fill="#ffff00"/><rect x="514" y="544" width="3" height="10" fill="#ff00ff"/><rect x="514" y="554" width="3" height="11" fill="#ffff00"/><rect x="522" y="544" width="3" height="12" fill="#ff00ff"/><rect x="522" y="556" width="3" height="11" fill="#ffff00"/><rect x="530" y="544" width="3" height="10" fill="#ff00ff"/><rect x="530" y="554" width="3" height="13" fill="#ffff00"/><rect x="538" y="544" width="3" height="4" fill="#ff00ff"/><rect x="538" y="548" width="3" height="19" fill="#ffff00"/><rect x="546" y="544" width="3" height="5" fill="#ff00ff"/><rect x="546" y="549" width="3" height="13" fill="#ffff00"/><rect x="554" y="528" width="3" height="16" fill="#ff00ff"/><rect x="554" y="544" width="3" height="13" fill="#ffff00"/><rect x="562" y="521" width="3" height="23" fill="#ff00ff"/><rect x="562" y="544" width="3" height="11" fill="#ffff00"/><rect x="570" y="514" width="3" height="30" fill="#ff00ff"/><rect x="570" y="544" width="3" height="6" fill="#ffff00"/><rect x="578" y="517" width="3" height="27" fill="#ff00ff"/><rect x="578" y="544" width="3" height="2" fill="#ffff00"/><rect x="586" y="526" width="3" height="18" fill="#ff00ff"/><rect x="586" y="544" width="3" height="4" fill="#ffff00"/><rect x="594" y="531" width="3" height="13" fill="#ff00ff"/><rect x="594" y="544" width="3" height="4" fill="#ffff00"/><rect x="602" y="531" width="3" height="13" fill="#ff00ff"/><rect x="602" y="544" width="3" height="2" fill="#ffff00"/><rect x="610" y="534" width="3" height="10" fill="#ff00ff"/><rect x="610" y="544" width="3" height="1" fill="#ffff00"/><rect x="618" y="536" width="3" height="8" fill="#ff00ff"/><rect x="618" y="544" width="3" height="1" fill="#ffff00"/><rect x="626" y="537" width="3" height="7" fill="#ff00ff"/><rect x="626" y="544" width="3" height="2" fill="#ffff00"/><rect x="634" y="534" width="3" height="10" fill="#ff00ff"/><rect x="634" y="544" width="3" height="1" fill="#ffff00"/><rect x="642" y="529" width="3" height="15" fill="#ff00ff"/><rect x="650" y="530" width="3" height="14" fill="#ff00ff"/><rect x="658" y="530" width="3" height="14" fill="#ff00ff"/><rect x="666" y="529" width="3" height="15" fill="#ff00ff"/><rect x="674" y="530" width="3" height="14" fill="#ff00ff"/><rect x="682" y="534" width="3" height="10" fill="#ff00ff"/><rect x="690" y="532" width="3" height="12" fill="#ff00ff"/><rect x="698" y="535" width="3" height="9" fill="#ff00ff"/><rect x="706" y="536" width="3" height="8" fill="#ff00ff"/><rect x="714" y="536" width="3" height="3" fill="#ffff00"/><rect x="714" y="539" width="3" height="5" fill="#ff00ff"/><rect x="722" y="535" width="3" height="5" fill="#ffff00"/><rect x="722" y="540" width="3" height="4" fill="#ff00ff"/><rect x="730" y="534" width="3" height="6" fill="#ffff00"/><rect x="730" y="540" width="3" height="4" fill="#ff00ff"/><rect x="738" y="534" width="3" height="5" fill="#ffff00"/><rect x="738" y="539" width="3" height="5" fill="#ff00ff"/><rect x="746" y="533" width="3" height="4" fill="#ffff00"/><rect x="746" y="537" width="3" height="7" fill="#ff00ff"/><rect x="754" y="536" width="3" height="8" fill="#ffff00"/><rect x="762" y="539" width="3" height="5" fill="#ffff00"/><rect x="762" y="544" width="3" height="7" fill="#ff00ff"/><rect x="770" y="541" width="3" height="3" fill="#ffff00"/><rect x="770" y="544" width="3" height="10" fill="#ff00ff"/><rect x="778" y="543" width="3" height="1" fill="#ffff00"/><rect x="778" y="544" width="3" height="14" fill="#ff00ff"/><rect x="786" y="544" width="3" height="20" fill="#ff00ff"/><rect x="794" y="544" width="3" height="21" fill="#ff00ff"/><rect x="802" y="544" width="3" height="21" fill="#ff00ff"/><rect x="810" y="544" width="3" height="11" fill="#ff00ff"/><rect x="818" y="544" width="3" height="1" fill="#ff00ff"/><rect x="818" y="545" width="3" height="4" fill="#ffff00"/><rect x="826" y="541" width="3" height="3" fill="#ff00ff"/><rect x="826" y="544" width="3" height="5" fill="#ffff00"/><rect x="834" y="538" width="3" height="6" fill="#ff00ff"/><rect x="834" y="544" width="3" height="5" fill="#ffff00"/><rect x="842" y="539" width="3" height="5" fill="#ff00ff"/><rect x="842" y="544" width="3" height="7" fill="#ffff00"/><polyline points="3.3,559.2 11.0,555.3 18.7,552.0 24.0,551.5 37.3,551.5 43.9,553.2 54.9,553.7 65.8,558.1 76.8,560.3 87.8,562.5 96.6,566.3 111.9,566.9 124.0,569.6 131.7,571.3 153.6,570.4 164.6,570.8 180.0,575.2 197.5,573.7 215.0,577.4 241.4,575.8 259.0,570.4 270.0,563.5 281.4,553.3 292.7,543.0 311.0,538.5 333.6,530.5 351.8,529.4 370.0,530.5 388.2,528.7 406.4,532.8 429.0,535.0 451.8,541.9 474.5,543.7 497.3,554.4 531.4,571.5 550.0,569.5 574.3,567.1 598.6,567.1 622.9,562.2 647.2,554.2 671.5,550.1 700.6,544.5 720.0,540.4 749.2,536.3 780.8,538.0 802.7,541.6 817.2,539.7 831.8,541.1 844.0,543.5" fill="none" stroke="#0000ff" stroke-width="1" stroke-linejoin="round" /><polyline points="3.0,547.1 12.0,545.7 20.0,547.4 27.0,548.8 37.0,550.0 40.0,551.0 80.0,551.0 82.0,547.7 130.0,547.7 140.0,545.0 158.0,546.7 171.2,550.2 178.8,550.2 193.0,544.0 219.4,543.0 248.0,541.4 270.0,537.8 299.5,538.5 311.0,544.2 322.3,548.3 361.0,552.1 370.0,551.0 383.6,546.9 406.4,546.9 429.0,551.0 451.8,553.3 474.5,552.8 497.3,548.3 520.0,548.3 538.2,546.5 560.0,541.9 750.0,542.4 760.0,546.5 845.0,546.5" fill="none" stroke="#ffffff" stroke-width="2" stroke-linejoin="round" /><polygon points="179.00,551.70 184.30,557.00 184.30,561.00 180.80,558.50 180.50,558.80 180.50,565.50 177.50,565.50 177.50,558.80 177.20,558.50 173.70,561.00 173.70,557.00" fill="#00ff00"/><polygon points="187.00,535.00 192.30,540.30 192.30,544.30 188.80,541.80 188.50,542.10 188.50,548.80 185.50,548.80 185.50,542.10 185.20,541.80 181.70,544.30 181.70,540.30" fill="#00ff00"/><polygon points="195.00,519.90 200.30,525.20 200.30,529.20 196.80,526.70 196.50,527.00 196.50,533.70 193.50,533.70 193.50,527.00 193.20,526.70 189.70,529.20 189.70,525.20" fill="#00ff00"/><polygon points="523.00,551.00 528.30,556.30 528.30,560.30 524.80,557.80 524.50,558.10 524.50,564.80 521.50,564.80 521.50,558.10 521.20,557.80 517.70,560.30 517.70,556.30" fill="#00ff00"/><polygon points="531.00,557.80 536.30,563.10 536.30,567.10 532.80,564.60 532.50,564.90 532.50,571.60 529.50,571.60 529.50,564.90 529.20,564.60 525.70,567.10 525.70,563.10" fill="#00ff00"/><polygon points="539.00,546.50 544.30,551.80 544.30,555.80 540.80,553.30 540.50,553.60 540.50,560.30 537.50,560.30 537.50,553.60 537.20,553.30 533.70,555.80 533.70,551.80" fill="#00ff00"/><polygon points="547.00,535.50 552.30,540.80 552.30,544.80 548.80,542.30 548.50,542.60 548.50,549.30 545.50,549.30 545.50,542.60 545.20,542.30 541.70,544.80 541.70,540.80" fill="#00ff00"/><text x="7.2" y="488.7" fill="#c0c0c0" font-size="10" text-anchor="start" textLength="337" lengthAdjust="spacingAndGlyphs" >M1 TMA bands (25) 1.2129 1.2131 1.2127 0.9290 -0.9703 -3.2172 2.9389 0.0000</text></g><text x="1238" y="487.5" fill="#c0c0c0" font-size="10" text-anchor="start" textLength="33" lengthAdjust="spacingAndGlyphs" >35.7897</text><text x="1238" y="529" fill="#c0c0c0" font-size="10" text-anchor="start" textLength="10" lengthAdjust="spacingAndGlyphs" >10</text><text x="1238" y="548" fill="#c0c0c0" font-size="10" text-anchor="start" textLength="19" lengthAdjust="spacingAndGlyphs" >0.00</text><text x="1238" y="567" fill="#c0c0c0" font-size="10" text-anchor="start" textLength="13" lengthAdjust="spacingAndGlyphs" >-10</text><text x="1238" y="599" fill="#c0c0c0" font-size="10" text-anchor="start" textLength="37" lengthAdjust="spacingAndGlyphs" >-30.9619</text><line x1="1234" y1="525.5" x2="1236" y2="525.5" stroke="#c0c0c0" stroke-width="1" shape-rendering="crispEdges"/><line x1="1234" y1="544.5" x2="1236" y2="544.5" stroke="#c0c0c0" stroke-width="1" shape-rendering="crispEdges"/><line x1="1234" y1="563.5" x2="1236" y2="563.5" stroke="#c0c0c0" stroke-width="1" shape-rendering="crispEdges"/><g clip-path="url(#w5)"><line x1="3" y1="614.5" x2="1233" y2="614.5" stroke="#c8c8c8" stroke-width="1" stroke-dasharray="3,3" shape-rendering="crispEdges"/><polyline points="3.0,613.0 60.0,612.0 120.0,612.0 180.0,613.0 241.3,611.3 300.0,608.7 340.0,613.2 366.5,616.7 420.0,613.2 473.0,616.7 520.0,614.0 560.0,613.0 600.0,612.5 640.0,613.0 680.0,612.0 720.0,613.0 760.0,612.0 800.0,615.0 843.0,616.0" fill="none" stroke="#ff69b4" stroke-width="1" stroke-linejoin="round" stroke-dasharray="3,3" /><defs><clipPath id="w5g"><rect x="9" y="604" width="21" height="20"/><rect x="51" y="604" width="48" height="20"/><rect x="133" y="604" width="8" height="20"/><rect x="176" y="604" width="116" height="20"/><rect x="340" y="604" width="13" height="20"/><rect x="364" y="604" width="42" height="20"/><rect x="452" y="604" width="56" height="20"/><rect x="532" y="604" width="52" height="20"/><rect x="635" y="604" width="31" height="20"/><rect x="680" y="604" width="21" height="20"/><rect x="720" y="604" width="26" height="20"/><rect x="805" y="604" width="24" height="20"/></clipPath></defs><polyline points="3.0,616.0 9.0,614.0 14.0,611.0 28.0,611.0 32.0,614.0 42.0,619.6 51.0,616.0 76.0,608.3 87.0,608.3 99.0,610.0 115.0,612.0 135.0,614.0 141.0,616.0 160.0,618.6 176.0,618.0 196.0,612.7 204.2,613.2 237.0,608.2 268.0,606.8 289.8,606.6 299.6,609.2 322.7,621.4 339.9,614.0 353.2,614.0 363.9,619.3 387.8,609.5 406.5,614.0 419.8,617.5 451.8,620.1 459.8,616.7 478.4,613.2 507.7,614.0 520.0,619.3 532.0,616.7 552.0,610.0 584.0,611.3 600.0,614.0 613.3,612.1 634.6,614.0 648.0,611.3 666.5,614.0 680.0,613.2 690.5,610.0 701.0,611.3 709.0,614.8 720.0,614.0 735.8,610.0 746.5,611.3 759.8,618.5 781.0,617.5 805.0,621.2 813.0,615.3 829.0,612.7 843.7,618.5" fill="none" stroke="#f4a460" stroke-width="1.5" stroke-linejoin="round" /><g clip-path="url(#w5g)"><polyline points="3.0,616.0 9.0,614.0 14.0,611.0 28.0,611.0 32.0,614.0 42.0,619.6 51.0,616.0 76.0,608.3 87.0,608.3 99.0,610.0 115.0,612.0 135.0,614.0 141.0,616.0 160.0,618.6 176.0,618.0 196.0,612.7 204.2,613.2 237.0,608.2 268.0,606.8 289.8,606.6 299.6,609.2 322.7,621.4 339.9,614.0 353.2,614.0 363.9,619.3 387.8,609.5 406.5,614.0 419.8,617.5 451.8,620.1 459.8,616.7 478.4,613.2 507.7,614.0 520.0,619.3 532.0,616.7 552.0,610.0 584.0,611.3 600.0,614.0 613.3,612.1 634.6,614.0 648.0,611.3 666.5,614.0 680.0,613.2 690.5,610.0 701.0,611.3 709.0,614.8 720.0,614.0 735.8,610.0 746.5,611.3 759.8,618.5 781.0,617.5 805.0,621.2 813.0,615.3 829.0,612.7 843.7,618.5" fill="none" stroke="#32cd32" stroke-width="1.5" stroke-linejoin="round" /></g><text x="7" y="617.5" fill="#a0a0a0" font-size="10" text-anchor="start" textLength="235" lengthAdjust="spacingAndGlyphs" >M1 RSI + ma crosses (2,0,3,5) 27.3977 27.3977 35.8000</text></g><text x="1238" y="614.5" fill="#c0c0c0" font-size="10" text-anchor="start" textLength="33" lengthAdjust="spacingAndGlyphs" >102.817</text><text x="1238" y="619" fill="#c0c0c0" font-size="10" text-anchor="start" textLength="33" lengthAdjust="spacingAndGlyphs" >57.5373</text><text x="1238" y="623" fill="#c0c0c0" font-size="9" text-anchor="start" textLength="18" lengthAdjust="spacingAndGlyphs" >n/na</text><g clip-path="url(#w6)"><line x1="683" y1="633.5" x2="1233" y2="633.5" stroke="#00a0a8" stroke-width="1" stroke-dasharray="3,3" shape-rendering="crispEdges"/><line x1="683" y1="636.5" x2="1233" y2="636.5" stroke="#00a0a8" stroke-width="1" stroke-dasharray="3,3" shape-rendering="crispEdges"/><line x1="683" y1="640.5" x2="1233" y2="640.5" stroke="#00a0a8" stroke-width="1" stroke-dasharray="3,3" shape-rendering="crispEdges"/><line x1="683" y1="646.5" x2="1233" y2="646.5" stroke="#00a0a8" stroke-width="1" stroke-dasharray="3,3" shape-rendering="crispEdges"/><line x1="683" y1="653.5" x2="1233" y2="653.5" stroke="#00a0a8" stroke-width="1" stroke-dasharray="3,3" shape-rendering="crispEdges"/><line x1="683" y1="662.5" x2="1233" y2="662.5" stroke="#00a0a8" stroke-width="1" stroke-dasharray="3,3" shape-rendering="crispEdges"/><line x1="683" y1="670.5" x2="1233" y2="670.5" stroke="#00a0a8" stroke-width="1" stroke-dasharray="3,3" shape-rendering="crispEdges"/><line x1="683" y1="699.5" x2="763" y2="699.5" stroke="#00a0a8" stroke-width="1" stroke-dasharray="3,3" shape-rendering="crispEdges"/><line x1="733" y1="699.5" x2="1233" y2="699.5" stroke="#d2691e" stroke-width="1" stroke-dasharray="6,18" shape-rendering="crispEdges"/><line x1="683" y1="774.5" x2="1233" y2="774.5" stroke="#008f94" stroke-width="1" stroke-dasharray="3,3" shape-rendering="crispEdges"/><line x1="739" y1="803.5" x2="1233" y2="803.5" stroke="#cc6a2a" stroke-width="1" stroke-dasharray="3,3" shape-rendering="crispEdges"/><line x1="739" y1="812.5" x2="1233" y2="812.5" stroke="#cc6a2a" stroke-width="1" stroke-dasharray="3,3" shape-rendering="crispEdges"/><line x1="739" y1="821.5" x2="1233" y2="821.5" stroke="#cc6a2a" stroke-width="1" stroke-dasharray="3,3" shape-rendering="crispEdges"/><line x1="739" y1="827.5" x2="1233" y2="827.5" stroke="#cc6a2a" stroke-width="1" stroke-dasharray="3,3" shape-rendering="crispEdges"/><line x1="739" y1="833.5" x2="1233" y2="833.5" stroke="#cc6a2a" stroke-width="1" stroke-dasharray="3,3" shape-rendering="crispEdges"/><line x1="739" y1="838.5" x2="1233" y2="838.5" stroke="#cc6a2a" stroke-width="1" stroke-dasharray="3,3" shape-rendering="crispEdges"/><line x1="739" y1="849.5" x2="1233" y2="849.5" stroke="#cc6a2a" stroke-width="1" stroke-dasharray="3,3" shape-rendering="crispEdges"/><line x1="739" y1="859.5" x2="1233" y2="859.5" stroke="#cc6a2a" stroke-width="1" stroke-dasharray="3,3" shape-rendering="crispEdges"/><line x1="739" y1="870.5" x2="1233" y2="870.5" stroke="#cc6a2a" stroke-width="1" stroke-dasharray="3,3" shape-rendering="crispEdges"/><line x1="739" y1="880.5" x2="1233" y2="880.5" stroke="#cc6a2a" stroke-width="1" stroke-dasharray="3,3" shape-rendering="crispEdges"/><line x1="739" y1="896.5" x2="1233" y2="896.5" stroke="#cc6a2a" stroke-width="1" stroke-dasharray="3,3" shape-rendering="crispEdges"/><line x1="738.8" y1="699.19" x2="1233" y2="757.0" stroke="#cc6a2a" stroke-width="1" stroke-dasharray="18.42,5.74"/><line x1="738.8" y1="699.10" x2="1233" y2="809.8" stroke="#cc6a2a" stroke-width="1" stroke-dasharray="18.75,5.84"/><line x1="738.8" y1="698.94" x2="1233" y2="896.6" stroke="#cc6a2a" stroke-width="1" stroke-dasharray="19.71,6.14"/><line x1="738.8" y1="698.83" x2="1233" y2="957.8" stroke="#cc6a2a" stroke-width="1" stroke-dasharray="20.66,6.44"/><line x1="738.8" y1="698.72" x2="1233" y2="1019.5" stroke="#cc6a2a" stroke-width="1" stroke-dasharray="21.82,6.80"/><line x1="738.8" y1="698.58" x2="1233" y2="1095.4" stroke="#cc6a2a" stroke-width="1" stroke-dasharray="23.47,7.31"/><line x1="738.8" y1="698.44" x2="1233" y2="1172.9" stroke="#cc6a2a" stroke-width="1" stroke-dasharray="25.37,7.90"/><line x1="742" y1="774.5" x2="1233" y2="774.5" stroke="#cc6a2a" stroke-width="1" stroke-dasharray="3,3" shape-rendering="crispEdges"/><line x1="682.7" y1="773.8" x2="739.7" y2="699.3" stroke="#ff0000" stroke-width="1" stroke-dasharray="3,3"/><line x1="739.7" y1="699.3" x2="811.2" y2="773.8" stroke="#ff0000" stroke-width="1" stroke-dasharray="3,3"/><polyline points="3.0,816.9 19.6,701.2 43.8,824.5 83.7,685.4 91.3,734.4 99.7,701.2 123.3,761.0 131.5,680.9 171.7,870.4 187.4,675.8 211.5,755.6 235.7,684.5 243.3,712.0 267.5,687.0 315.8,873.4 339.7,772.2 363.2,887.9 387.4,692.1 427.3,880.4 467.5,760.4 475.7,782.8 491.7,681.8 515.3,877.3 547.6,680.3 563.3,737.4 579.3,721.1 587.5,842.0 603.5,699.0 627.7,751.9 643.4,639.2 659.4,753.4 667.6,731.4 675.4,764.6 683.6,676.4 707.5,806.4 739.5,700.0 763.4,891.7 779.4,813.1 795.5,849.4 811.8,706.0 843.6,813.1" fill="none" stroke="#00eefa" stroke-width="1" stroke-linejoin="round" /><text x="6.6" y="637.7" fill="#c0c0c0" font-size="10" text-anchor="start" textLength="100.7" lengthAdjust="spacingAndGlyphs" >ZUP_CCI_v48 -58.9372</text><text x="1112.7" y="631.5" fill="#008f94" font-size="10" text-anchor="start" textLength="79.7" lengthAdjust="spacingAndGlyphs" >Fe 100.0  218.71556</text><text x="1112.7" y="634.5" fill="#008f94" font-size="10" text-anchor="start" textLength="79.7" lengthAdjust="spacingAndGlyphs" >Fe 88.6  203.55556</text><text x="1112.7" y="637.5" fill="#008f94" font-size="10" text-anchor="start" textLength="79.7" lengthAdjust="spacingAndGlyphs" >Fe 78.6  190.66667</text><text x="1112.7" y="644" fill="#008f94" font-size="10" text-anchor="start" textLength="79.7" lengthAdjust="spacingAndGlyphs" >Fe 70.7  192.22222</text><text x="1112.7" y="651.2" fill="#008f94" font-size="10" text-anchor="start" textLength="79.7" lengthAdjust="spacingAndGlyphs" >Fe 61.8  179.77778</text><text x="1112.7" y="660" fill="#008f94" font-size="10" text-anchor="start" textLength="79.7" lengthAdjust="spacingAndGlyphs" >Fe 50.0  166.66667</text><text x="1112.7" y="668.7" fill="#008f94" font-size="10" text-anchor="start" textLength="79.7" lengthAdjust="spacingAndGlyphs" >Fe 38.2  153.55556</text><text x="1116.5" y="696.6" fill="#008f94" font-size="10" text-anchor="start" textLength="72" lengthAdjust="spacingAndGlyphs" >Fe 1  111.11111</text><text x="1164.8" y="696.6" fill="#cc6a2a" font-size="10" text-anchor="start" textLength="67" lengthAdjust="spacingAndGlyphs" >Fe 0  111.11111</text><text x="1120.8" y="771.7" fill="#008f94" font-size="10" text-anchor="start" textLength="62" lengthAdjust="spacingAndGlyphs" >Fe 0  0.00000</text><text x="1172" y="771.7" fill="#cc6a2a" font-size="10" text-anchor="start" textLength="59.8" lengthAdjust="spacingAndGlyphs" >Fe 1  0.00000</text><text x="1231.8" y="800.4" fill="#cc6a2a" font-size="10" text-anchor="end" >Fe 38.2  -42.44444</text><text x="1231.8" y="809.5" fill="#cc6a2a" font-size="10" text-anchor="end" >Fe 50.0  -55.55556</text><text x="1231.8" y="818.5" fill="#cc6a2a" font-size="10" text-anchor="end" >Fe 61.8  -68.66667</text><text x="1231.8" y="825.2" fill="#cc6a2a" font-size="10" text-anchor="end" >Fe 70.7  -78.55556</text><text x="1231.8" y="830.6" fill="#cc6a2a" font-size="10" text-anchor="end" >Fe 78.6  -87.33333</text><text x="1231.8" y="835.2" fill="#cc6a2a" font-size="10" text-anchor="end" >Fe 88.6  -98.44444</text><text x="1231.8" y="845.1" fill="#cc6a2a" font-size="10" text-anchor="end" >Fe 100.0  -111.11111</text><text x="1231.8" y="855.4" fill="#cc6a2a" font-size="10" text-anchor="end" >Fe 112.8  -125.33333</text><text x="1231.8" y="866.9" fill="#cc6a2a" font-size="10" text-anchor="end" >Fe 127.2  -141.33333</text><text x="1231.8" y="876.6" fill="#cc6a2a" font-size="10" text-anchor="end" >Fe 141.4  -157.11111</text><text x="1231.8" y="892.6" fill="#cc6a2a" font-size="10" text-anchor="end" >Fe 161.8  -179.77778</text></g><text x="1237" y="636" fill="#c0c0c0" font-size="10" text-anchor="start" textLength="38" lengthAdjust="spacingAndGlyphs" >218.7156</text><text x="1238" y="778" fill="#c0c0c0" font-size="10" text-anchor="start" textLength="19" lengthAdjust="spacingAndGlyphs" >0.00</text><text x="1238" y="903" fill="#c0c0c0" font-size="10" text-anchor="start" textLength="40" lengthAdjust="spacingAndGlyphs" >-193.0275</text><text x="7.3" y="13.7" fill="#c0c0c0" font-size="10" text-anchor="start" textLength="54" lengthAdjust="spacingAndGlyphs" >EURUSD,M1</text><text x="8" y="33.6" fill="#a9a9a9" font-size="23.5" text-anchor="start" textLength="64" lengthAdjust="spacingAndGlyphs" >META</text><text x="74.3" y="33.6" fill="#00bef0" font-size="23.5" text-anchor="start" textLength="85" lengthAdjust="spacingAndGlyphs" >BINARY</text><text x="158.2" y="33.6" fill="#a9a9a9" font-size="23.5" text-anchor="start" textLength="154.8" lengthAdjust="spacingAndGlyphs" >OPTIONS.com</text><text x="7.3" y="27.4" fill="#9a9a9a" font-size="9.5" text-anchor="start" textLength="169" lengthAdjust="spacingAndGlyphs" >pbdiff Current = 1.0555555556290084e-05</text><rect x="8" y="39" width="305" height="18.5" fill="#ffffff" /><text x="26.6" y="51.7" fill="#8c8c96" font-size="11" text-anchor="start" textLength="265.4" lengthAdjust="spacingAndGlyphs" >Check MetaBinaryOptions.com for more free indicators!</text><rect x="934" y="4" width="298" height="412" fill="#ffffff" /><rect x="935" y="5" width="296" height="39" fill="#f7f7f7" /><rect x="935" y="44" width="296" height="38" fill="#f2f2f2" /><rect x="935" y="82" width="296" height="102" fill="#f7f7f7" /><rect x="935" y="184" width="296" height="48" fill="#f2f2f2" /><rect x="935" y="232" width="296" height="183" fill="#f7f7f7" /><text x="970" y="32.8" fill="#a8a8ad" font-size="27" text-anchor="start" textLength="226" lengthAdjust="spacingAndGlyphs" >MBO SIMULATOR</text><text x="961" y="67.2" fill="#8a8a8a" font-size="14" text-anchor="start" textLength="44" lengthAdjust="spacingAndGlyphs" >Expiry :</text><rect x="1012.5" y="53.5" width="39" height="19" fill="#ffffff" stroke="#6e6e6e" rx="2" stroke-width="1"/><text x="1032" y="68" fill="#8a8a8a" font-size="14" text-anchor="middle" >10</text><text x="1059.5" y="67.2" fill="#8a8a8a" font-size="14" text-anchor="start" textLength="44.7" lengthAdjust="spacingAndGlyphs" >minutes</text><rect x="1110.5" y="53.5" width="39" height="19" fill="#ffffff" stroke="#6e6e6e" rx="2" stroke-width="1"/><text x="1130" y="68" fill="#8a8a8a" font-size="14" text-anchor="middle" >0</text><text x="1156.4" y="67.2" fill="#8a8a8a" font-size="14" text-anchor="start" textLength="47.6" lengthAdjust="spacingAndGlyphs" >seconds</text><rect x="954" y="94" width="78" height="78" fill="#aaaaaa" /><text x="991.5" y="138" fill="#ffffff" font-size="13" text-anchor="middle" >DOWN</text><rect x="1033" y="94" width="100" height="18" fill="#00aee8" /><text x="1061" y="108.2" fill="#ffffff" font-size="14" text-anchor="start" textLength="45" lengthAdjust="spacingAndGlyphs" >1.21283</text><text x="1065" y="138" fill="#8a8a8a" font-size="14" text-anchor="start" textLength="36.4" lengthAdjust="spacingAndGlyphs" >Invest:</text><rect x="1048.5" y="143.5" width="69" height="19" fill="#ffffff" stroke="#6e6e6e" rx="2" stroke-width="1"/><text x="1075" y="157.6" fill="#8a8a8a" font-size="14" text-anchor="start" textLength="13.4" lengthAdjust="spacingAndGlyphs" >25</text><rect x="1134" y="94" width="78" height="78" fill="#00aee8" /><text x="1172" y="138" fill="#ffffff" font-size="13" text-anchor="middle" >UP</text><text x="1027.6" y="202.7" fill="#8a8a8a" font-size="14" text-anchor="start" textLength="111" lengthAdjust="spacingAndGlyphs" >Balance : $1000.00</text><text x="986.2" y="222.7" fill="#8a8a8a" font-size="14" text-anchor="start" textLength="194" lengthAdjust="spacingAndGlyphs" >0 Wins - 0 Losses - 0 Ties - 0.0%</text>
</svg></body></html>
